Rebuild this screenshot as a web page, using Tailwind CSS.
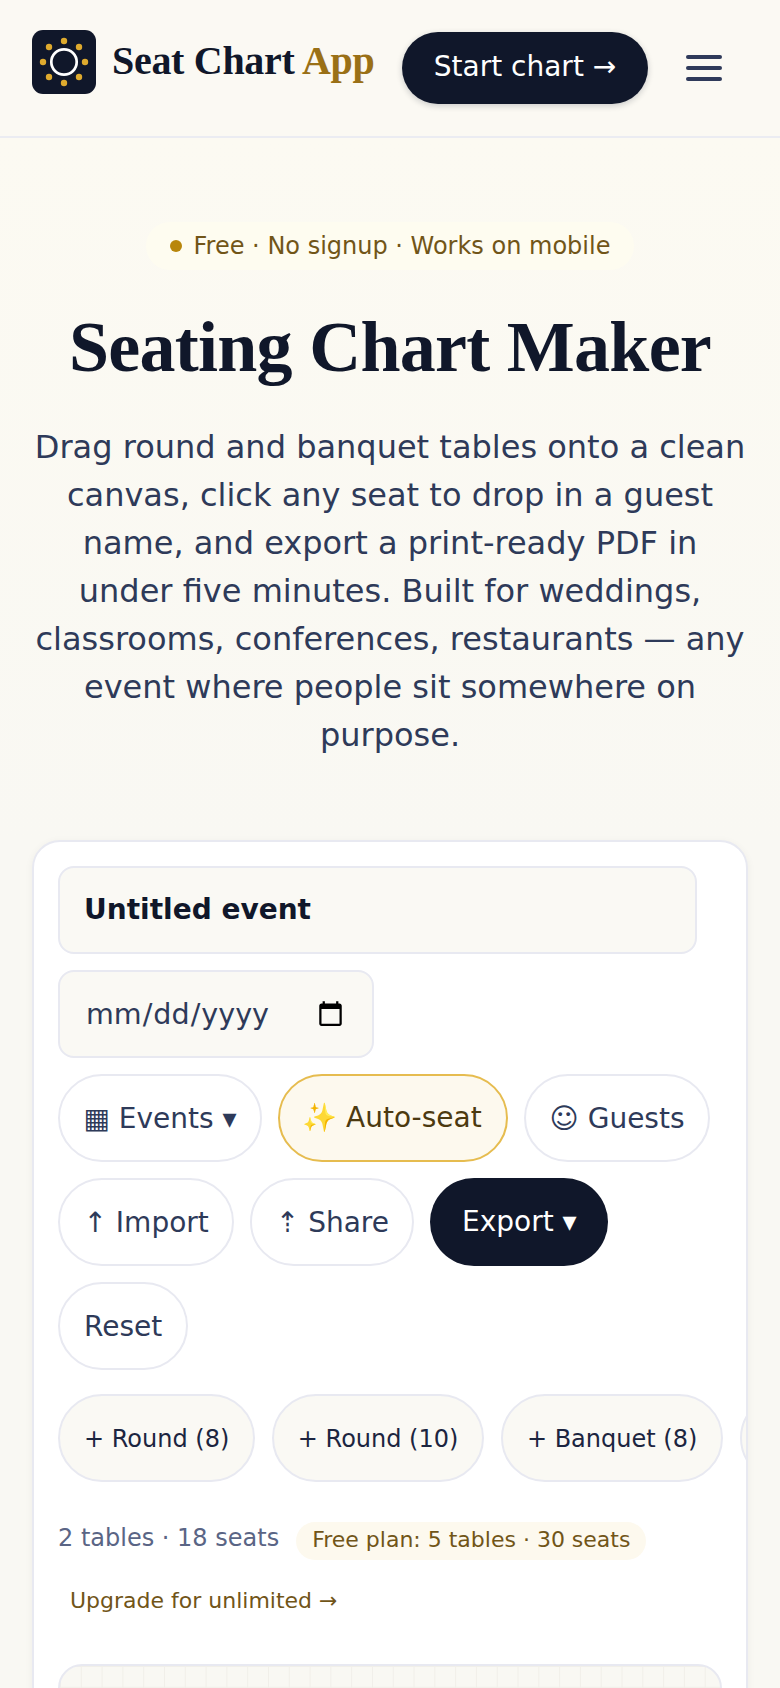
<!DOCTYPE html>
<html lang="en">
<head>
    <meta charset="UTF-8">
    <meta name="viewport" content="width=device-width, initial-scale=1.0">
    <title>Seating Chart Maker</title>
    <script src="https://cdn.jsdelivr.net/npm/@tailwindcss/browser@4"></script>
</head>
<body class="bg-[#f9f8f3] font-['DejaVu_Sans',sans-serif] text-[#2e3a59] overflow-hidden h-[1688px]">

<!-- Header -->
<header class="h-[138px] border-b-2 border-[#ebecf2] bg-[#fbf9f3] flex pl-[32px] pr-[58px]">
    <div class="flex items-start pt-[30px]">
        <svg class="w-[64px] h-[64px] shrink-0" viewBox="0 0 64 64">
            <rect width="64" height="64" rx="11" fill="#10172a"/>
            <circle cx="32" cy="32" r="12.7" fill="none" stroke="#fff" stroke-width="2.7"/>
            <g fill="#deaa2e">
                <circle cx="32" cy="11" r="3.2"/><circle cx="32" cy="53" r="3.2"/>
                <circle cx="11" cy="32" r="3.2"/><circle cx="53" cy="32" r="3.2"/>
                <circle cx="17" cy="17" r="3.2"/><circle cx="47" cy="17" r="3.2"/>
                <circle cx="17" cy="47" r="3.2"/><circle cx="47" cy="47" r="3.2"/>
            </g>
        </svg>
        <div class="ml-[16px] mt-[6px] font-['Liberation_Serif',serif] font-bold text-[40px] tracking-[-0.3px] leading-[50px] text-[#10172a] whitespace-nowrap">Seat Chart <span class="text-[#9a7016]">App</span></div>
    </div>
    <a class="ml-auto mt-[32px] h-[72px] w-[246px] pb-[2px] rounded-full bg-[#10172a] text-[#fff] text-[28px] flex items-center justify-center shadow-[0_2px_6px_rgba(16,23,42,0.2)] whitespace-nowrap">Start chart →</a>
    <div class="ml-[38px] mt-[55px] w-[36px] flex flex-col gap-[7px]">
        <span class="block h-[4px] rounded-full bg-[#2f3a5a]"></span>
        <span class="block h-[4px] rounded-full bg-[#2f3a5a]"></span>
        <span class="block h-[4px] rounded-full bg-[#2f3a5a]"></span>
    </div>
</header>

<!-- Hero -->
<section class="bg-[linear-gradient(180deg,#fcfaf2,#f9f8f3)] h-[702px] px-[32px] pt-[84px] text-center">
    <div class="inline-flex items-center h-[48px] px-[24px] rounded-full bg-[#fefcf0] text-[#715518] text-[24px] whitespace-nowrap">
        <span class="w-[12px] h-[12px] rounded-full bg-[#b8860b] mr-[12px]"></span>Free · No signup · Works on mobile
    </div>
    <h1 class="mt-[34px] font-['Liberation_Serif',serif] font-bold text-[72px] tracking-[-0.72px] leading-[86px] text-[#10172a] whitespace-nowrap">Seating Chart Maker</h1>
    <p class="mt-[33px] text-[32px] leading-[48px] text-[#2e3a59]">Drag round and banquet tables onto a clean canvas, click any seat to drop in a guest name, and export a print-ready PDF in under five minutes. Built for weddings, classrooms, conferences, restaurants — any event where people sit somewhere on purpose.</p>
</section>

<!-- Builder card -->
<main class="px-[32px]">
    <div class="h-[900px] bg-white border-2 border-[#e8e9f1] rounded-[28px] pt-[24px] pl-[24px] overflow-hidden shadow-[0_2px_8px_rgba(16,23,42,0.05)]">
        <input type="text" value="Untitled event" class="block w-[639px] h-[88px] px-[24px] pb-[2px] rounded-[16px] border-2 border-[#e8e9f1] bg-[#faf9f4] text-[28px] font-bold text-[#10172a]">
        <input type="date" class="block mt-[16px] w-[316px] h-[88px] px-[25px] rounded-[16px] border-2 border-[#e8e9f1] bg-[#faf9f4] text-[28.6px] text-[#2e3a59]">

        <div class="mt-[16px] flex flex-wrap gap-x-[16px] gap-y-[16px] w-[670px] text-[28px]">
            <button class="h-[88px] px-[23.5px] pt-[2px] rounded-full border-2 border-[#e8e9f1] bg-white whitespace-nowrap">▦ Events ▾</button>
            <button class="h-[88px] pl-[22px] pr-[24.5px] rounded-full border-2 border-[#e6bc4f] bg-[#fdf9ee] text-[#4c3a10] whitespace-nowrap">✨ Auto-seat</button>
            <button class="h-[88px] px-[23.5px] pt-[2px] rounded-full border-2 border-[#e8e9f1] bg-white whitespace-nowrap">☺ Guests</button>
            <button class="h-[88px] px-[23.5px] pt-[2px] rounded-full border-2 border-[#e8e9f1] bg-white whitespace-nowrap">↑ Import</button>
            <button class="h-[88px] px-[23.5px] pt-[2px] rounded-full border-2 border-[#e8e9f1] bg-white whitespace-nowrap">⇡ Share</button>
            <button class="h-[88px] px-[31.5px] pb-[1px] rounded-full bg-[#10172a] text-white whitespace-nowrap">Export ▾</button>
            <button class="h-[88px] px-[24px] pt-[2px] rounded-full border-2 border-[#e8e9f1] bg-white whitespace-nowrap">Reset</button>
        </div>

        <div class="mt-[24px] flex gap-[16.5px] w-[688px] overflow-hidden text-[24px] text-[#1c2540]">
            <button class="shrink-0 h-[88px] px-[24px] pt-[2px] rounded-full border-2 border-[#e8e9f1] bg-[#faf9f4] whitespace-nowrap">+ Round (8)</button>
            <button class="shrink-0 h-[88px] px-[24px] pt-[2px] rounded-full border-2 border-[#e8e9f1] bg-[#faf9f4] whitespace-nowrap">+ Round (10)</button>
            <button class="shrink-0 h-[88px] px-[24px] pt-[2px] rounded-full border-2 border-[#e8e9f1] bg-[#faf9f4] whitespace-nowrap">+ Banquet (8)</button>
            <!-- next pill runs off the scroll edge, only its rim shows -->
            <span class="shrink-0 w-[200px] h-[88px] rounded-full border-2 border-[#e8e9f1] bg-[#faf9f4]"></span>
        </div>

        <div class="mt-[40px] flex items-center flex-wrap w-[640px]">
            <span class="text-[24px] leading-[30px] text-[#5a6585] mr-[17px] pb-[6px]">2 tables · 18 seats</span>
            <span class="h-[38px] px-[16px] pb-[3px] rounded-full bg-[#fdf9ee] text-[#715518] text-[22px] flex items-center whitespace-nowrap">Free plan: 5 tables · 30 seats</span>
        </div>
        <a class="block mt-[25px] ml-[12px] text-[22px] leading-[32px] text-[#715518]">Upgrade for unlimited →</a>

        <div class="mt-[47px] w-[664px] h-[400px] rounded-[24px] border-2 border-[#e8e9f1] bg-[#f9f8f3] bg-[linear-gradient(90deg,#f1efe9_1px,transparent_1px),linear-gradient(180deg,#f1efe9_1px,transparent_1px)] bg-[size:20.8px_20.8px]"></div>
    </div>
</main>
</body>
</html>
